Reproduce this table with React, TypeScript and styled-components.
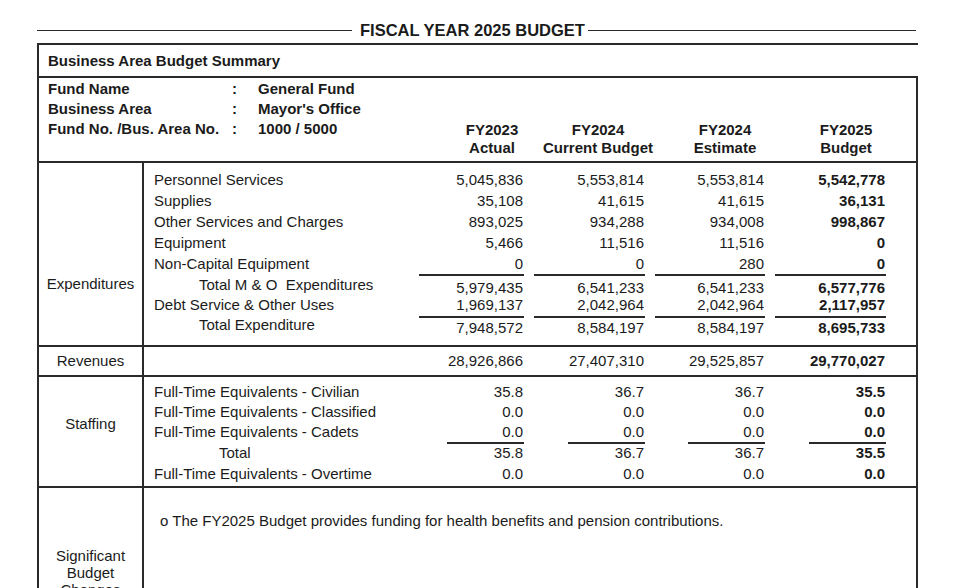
import React from 'react';
import styled, { createGlobalStyle } from 'styled-components';

const INK = '#1b1b1b';
const LINE = '#2a2a2a';

const GlobalStyle = createGlobalStyle`
  html, body { margin: 0; padding: 0; background: #ffffff; overflow: hidden; }
  body {
    font-family: "Liberation Sans", Arial, Helvetica, sans-serif;
    font-size: 15px;
    color: ${INK};
  }
  * { box-sizing: border-box; }
`;

const Page = styled.div`
  width: 953px;
  padding: 20px 0 0 37px;
`;

const TitleBar = styled.header`
  display: flex;
  align-items: center;
  width: 879px;
  height: 20px;
  margin-bottom: 3px;
`;

const TitleRule = styled.div<{ $w?: number }>`
  height: 0;
  border-top: 1.5px solid ${LINE};
  ${(p) => (p.$w ? `flex: 0 0 ${p.$w}px;` : 'flex: 1 1 auto;')}
`;

const TitleText = styled.h1`
  margin: 0 3px 0 8px;
  font-size: 16.5px;
  font-weight: bold;
  line-height: 20px;
  white-space: nowrap;
`;

const Sheet = styled.div`
  width: 881px;
  border-top: 2px solid ${LINE};
  border-left: 2px solid ${LINE};
`;

const SheetTitle = styled.div`
  height: 31px;
  line-height: 31px;
  padding-left: 9px;
  font-weight: bold;
`;

const Body = styled.div`
  border-top: 2px solid ${LINE};
  border-right: 2px solid ${LINE};
`;

const FundSection = styled.div`
  display: flex;
  align-items: flex-end;
  height: 83px;
`;

const InfoGrid = styled.div`
  align-self: flex-start;
  display: grid;
  grid-template-columns: 184px 26px auto;
  width: 403px;
  padding: 1px 0 0 9px;
  line-height: 20px;
  font-weight: bold;
  white-space: nowrap;
`;

const HeaderGrid = styled.div`
  display: grid;
  grid-template-columns: 100px 112px 142px 100px;
  padding-bottom: 4px;
  line-height: 18px;
  font-weight: bold;
  text-align: center;
  white-space: nowrap;
`;

const Section = styled.section`
  display: flex;
  border-top: 2px solid ${LINE};
`;

const SideCell = styled.div<{ $pt?: number; $lh?: number; $minH?: number }>`
  flex: 0 0 105px;
  display: flex;
  flex-direction: column;
  align-items: center;
  justify-content: ${(p) => (p.$pt !== undefined ? 'flex-start' : 'center')};
  padding-top: ${(p) => p.$pt ?? 0}px;
  min-height: ${(p) => p.$minH ?? 0}px;
  border-right: 2px solid ${LINE};
  line-height: ${(p) => p.$lh ?? 20}px;
  text-align: center;
`;

const DataGrid = styled.div<{ $pt?: number; $pb?: number }>`
  flex: 1 1 auto;
  display: grid;
  grid-template-columns: 255px 105px 111px 110px 111px;
  column-gap: 10px;
  align-content: start;
  padding: ${(p) => p.$pt ?? 0}px 0 ${(p) => p.$pb ?? 0}px 10px;
`;

const LabelCell = styled.div<{ $indent: number; $lh: number; $pt: number; $mt: number }>`
  padding-left: ${(p) => p.$indent}px;
  padding-top: ${(p) => p.$pt}px;
  margin-top: ${(p) => p.$mt}px;
  line-height: ${(p) => p.$lh}px;
  white-space: pre;
`;

type Rule = 'none' | 'full' | 'short';

const NumCell = styled.div<{ $bold: boolean; $lh: number; $rule: Rule; $mt: number; $pt: number }>`
  text-align: right;
  padding-right: 1px;
  padding-top: ${(p) => p.$pt}px;
  margin-top: ${(p) => p.$mt}px;
  line-height: ${(p) => p.$lh}px;
  font-weight: ${(p) => (p.$bold ? 'bold' : 'normal')};
  border-top: ${(p) => (p.$rule === 'none' ? '0' : `2px solid ${LINE}`)};
  ${(p) => (p.$rule === 'short' ? 'justify-self: end; width: 77px;' : '')}
`;

const NoteCell = styled.div`
  flex: 1 1 auto;
  padding: 24px 0 0 16px;
  line-height: 18px;
`;

type Kind = 'item' | 'subtotal' | 'tight' | 'total' | 'staff' | 'staffTotal' | 'staffLast' | 'revenue';

interface Spec {
  lh: number;
  rule?: Rule;
  numPt?: number;
  numMt?: number;
  labelPt?: number;
  mt?: number;
}

const SPECS: Record<Kind, Spec> = {
  item: { lh: 21 },
  subtotal: { lh: 17, rule: 'full', numPt: 3, labelPt: 2 },
  tight: { lh: 17 },
  total: { lh: 17, rule: 'full', numMt: 3, numPt: 1, labelPt: 3 },
  staff: { lh: 20 },
  staffTotal: { lh: 17, rule: 'short', labelPt: 2 },
  staffLast: { lh: 20, mt: 3 },
  revenue: { lh: 28 },
};

interface RowData {
  label: string;
  values: string[];
  kind: Kind;
  indent?: number;
}

const DataRow: React.FC<RowData> = ({ label, values, kind, indent = 0 }) => {
  const s = SPECS[kind];
  return (
    <>
      <LabelCell $indent={indent} $lh={s.lh} $pt={s.labelPt ?? 0} $mt={s.mt ?? 0}>
        {label}
      </LabelCell>
      {values.map((v, i) => (
        <NumCell
          key={i}
          $bold={i === 3}
          $lh={s.lh}
          $rule={s.rule ?? 'none'}
          $mt={(s.numMt ?? 0) + (s.mt ?? 0)}
          $pt={s.numPt ?? 0}
        >
          {v}
        </NumCell>
      ))}
    </>
  );
};

const expenditures: RowData[] = [
  { label: 'Personnel Services', values: ['5,045,836', '5,553,814', '5,553,814', '5,542,778'], kind: 'item' },
  { label: 'Supplies', values: ['35,108', '41,615', '41,615', '36,131'], kind: 'item' },
  { label: 'Other Services and Charges', values: ['893,025', '934,288', '934,008', '998,867'], kind: 'item' },
  { label: 'Equipment', values: ['5,466', '11,516', '11,516', '0'], kind: 'item' },
  { label: 'Non-Capital Equipment', values: ['0', '0', '280', '0'], kind: 'item' },
  { label: 'Total M & O  Expenditures', values: ['5,979,435', '6,541,233', '6,541,233', '6,577,776'], kind: 'subtotal', indent: 45 },
  { label: 'Debt Service & Other Uses', values: ['1,969,137', '2,042,964', '2,042,964', '2,117,957'], kind: 'tight' },
  { label: 'Total Expenditure', values: ['7,948,572', '8,584,197', '8,584,197', '8,695,733'], kind: 'total', indent: 45 },
];

const staffing: RowData[] = [
  { label: 'Full-Time Equivalents - Civilian', values: ['35.8', '36.7', '36.7', '35.5'], kind: 'staff' },
  { label: 'Full-Time Equivalents - Classified', values: ['0.0', '0.0', '0.0', '0.0'], kind: 'staff' },
  { label: 'Full-Time Equivalents - Cadets', values: ['0.0', '0.0', '0.0', '0.0'], kind: 'staff' },
  { label: 'Total', values: ['35.8', '36.7', '36.7', '35.5'], kind: 'staffTotal', indent: 65 },
  { label: 'Full-Time Equivalents - Overtime', values: ['0.0', '0.0', '0.0', '0.0'], kind: 'staffLast' },
];

const headers = [
  ['FY2023', 'Actual'],
  ['FY2024', 'Current Budget'],
  ['FY2024', 'Estimate'],
  ['FY2025', 'Budget'],
];

export default function App() {
  return (
    <>
      <GlobalStyle />
      <Page>
        <TitleBar>
          <TitleRule $w={315} />
          <TitleText>FISCAL YEAR 2025 BUDGET</TitleText>
          <TitleRule />
        </TitleBar>
        <Sheet>
          <SheetTitle>Business Area Budget Summary</SheetTitle>
          <Body>
            <FundSection>
              <InfoGrid>
                <span>Fund Name</span><span>:</span><span>General Fund</span>
                <span>Business Area</span><span>:</span><span>Mayor's Office</span>
                <span>Fund No. /Bus. Area No.</span><span>:</span><span>1000 / 5000</span>
              </InfoGrid>
              <HeaderGrid>
                {headers.map(([a, b], i) => (
                  <div key={i}>
                    {a}
                    <br />
                    {b}
                  </div>
                ))}
              </HeaderGrid>
            </FundSection>

            <Section>
              <SideCell $pt={111}>Expenditures</SideCell>
              <DataGrid $pt={5.5} $pb={9.5}>
                {expenditures.map((r, i) => (
                  <DataRow key={i} {...r} />
                ))}
              </DataGrid>
            </Section>

            <Section>
              <SideCell>Revenues</SideCell>
              <DataGrid>
                <DataRow label="" values={['28,926,866', '27,407,310', '29,525,857', '29,770,027']} kind="revenue" />
              </DataGrid>
            </Section>

            <Section>
              <SideCell $pt={37}>Staffing</SideCell>
              <DataGrid $pt={5} $pb={2}>
                {staffing.map((r, i) => (
                  <DataRow key={i} {...r} />
                ))}
              </DataGrid>
            </Section>

            <Section>
              <SideCell $lh={17} $minH={168}>
                Significant
                <br />
                Budget
                <br />
                Changes
              </SideCell>
              <NoteCell>o The FY2025 Budget provides funding for health benefits and pension contributions.</NoteCell>
            </Section>
          </Body>
        </Sheet>
      </Page>
    </>
  );
}
